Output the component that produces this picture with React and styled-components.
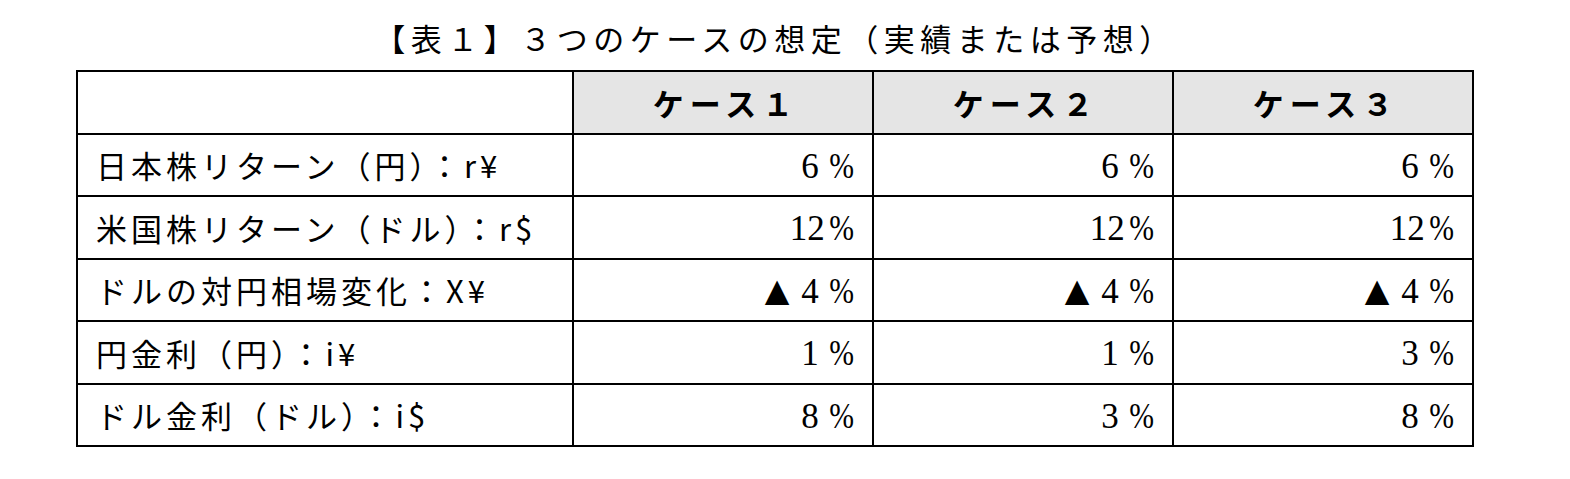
import React from 'react'
import styled, { createGlobalStyle } from 'styled-components'

const GlobalStyle = createGlobalStyle`
 html, body {
  margin: 0;
  padding: 0;
  background: #ffffff;
 }
 body {
  font-family: "Noto Sans CJK JP", "Liberation Sans", sans-serif;
  color: #000;
 }
`

const rows = [
 { label: '日本株リターン（円）：r¥', values: ['6', '6', '6'] },
 { label: '米国株リターン（ドル）：r$', values: ['12', '12', '12'] },
 { label: 'ドルの対円相場変化：X¥', values: ['4', '4', '4'], minus: true },
 { label: '円金利（円）：i¥', values: ['1', '1', '3'] },
 { label: 'ドル金利（ドル）：i$', values: ['8', '3', '8'] },
]

const cases = ['ケース１', 'ケース２', 'ケース３']

const App = () => {
 return (
  <Page>
   <GlobalStyle />
   <Title>【表１】３つのケースの想定（実績または予想）</Title>
   <Grid>
    <HeadCell $blank />
    {cases.map((c) => (
     <HeadCell key={c}>{c}</HeadCell>
    ))}
    {rows.map((row) => (
     <React.Fragment key={row.label}>
      <LabelCell>{row.label}</LabelCell>
      {row.values.map((v, i) => (
       <ValueCell key={i}>
        {row.minus && <Triangle>▲</Triangle>}
        <Num $wide={v.length > 1}>{v}</Num>
        <Pct>%</Pct>
       </ValueCell>
      ))}
     </React.Fragment>
    ))}
   </Grid>
  </Page>
 )
}

// Styled Components

const Page = styled.div`
 width: 1570px;
 height: 479px;
 padding: 18px 0 0 76px;
 box-sizing: border-box;
`

const Title = styled.div`
 width: 1398px;
 text-align: center;
 font-size: 31px;
 line-height: 40px;
 letter-spacing: 5.5px;
 margin-bottom: 12px;
`

const Grid = styled.div`
 display: grid;
 grid-template-columns: 494px 298px 298px 298px;
 grid-auto-rows: 60.5px;
 gap: 2px;
 padding: 2px;
 background: #000;
 width: max-content;
`

const HeadCell = styled.div`
 background: ${(p) => (p.$blank ? '#ffffff' : '#e5e5e5')};
 display: flex;
 align-items: center;
 justify-content: center;
 font-size: 31px;
 font-weight: 700;
 letter-spacing: 6px;
 padding-left: 6px;
`

const LabelCell = styled.div`
 background: #fff;
 display: flex;
 align-items: center;
 padding-left: 18px;
 font-size: 31px;
 letter-spacing: 4px;
`

const ValueCell = styled.div`
 background: #fff;
 display: flex;
 align-items: center;
 justify-content: flex-end;
 padding-right: 18px;
 font-family: "Liberation Serif", "DejaVu Serif", serif;
 font-size: 35px;
 padding-top: 4px;
`

const Triangle = styled.span`
 font-family: "DejaVu Sans", sans-serif;
 font-size: 32px;
 margin-right: 12px;
 margin-top: -4px;
`

const Num = styled.span`
 margin-right: ${(p) => (p.$wide ? '0px' : '6px')};
`

const Pct = styled.span`
 display: inline-block;
 transform: scaleX(0.85);
 transform-origin: right center;
`

export default App
